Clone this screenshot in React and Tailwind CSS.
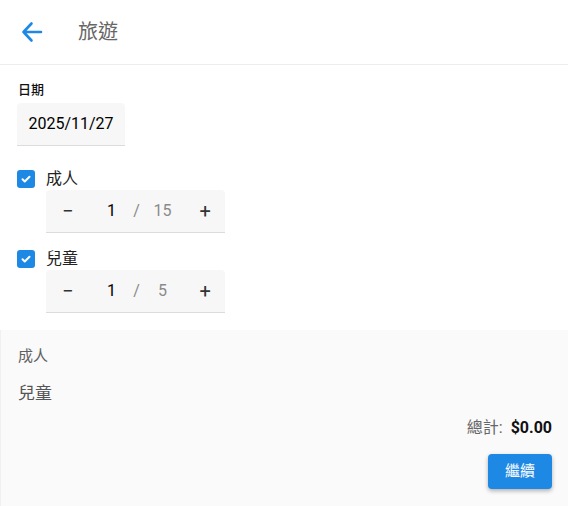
import { useState } from 'react'

const font = { fontFamily: 'Roboto, "Noto Sans CJK TC", sans-serif' }

function Stepper({ value, max }) {
  return (
    <div className="ml-[46px] mt-[1px] flex h-[43px] w-[179px] items-center rounded-t bg-[#f7f7f7] border-b border-[#dcdcdc] text-[16px]">
      <span className="w-[44px] text-center text-[20px] text-[#333]">−</span>
      <span className="w-[44px] text-center text-black">{value}</span>
      <span className="text-[#8a8a8a]">/</span>
      <span className="w-[46px] text-center text-[#8a8a8a]">{max}</span>
      <span className="w-[40px] text-center text-[20px] text-[#333]">+</span>
    </div>
  )
}

function Check({ label }) {
  return (
    <div className="flex items-center h-[20px] pl-[17px]">
      <span className="flex h-[18px] w-[18px] items-center justify-center rounded-[3px] bg-[#1e88e5]">
        <svg width="12" height="12" viewBox="0 0 24 24" fill="none" stroke="white" strokeWidth="4" strokeLinecap="round" strokeLinejoin="round">
          <path d="M5 12.5l4.5 4.5L19 7.5" />
        </svg>
      </span>
      <span className="ml-[11px] text-[16px] text-[#222]">{label}</span>
    </div>
  )
}

export default function App() {
  const [adult] = useState(1)
  const [child] = useState(1)

  return (
    <div className="w-[568px] h-[506px] bg-white overflow-hidden" style={font}>
      <div className="flex h-[65px] items-center border-b border-[#ededed]">
        <svg className="ml-[20px]" width="24" height="24" viewBox="0 0 24 24" fill="none" stroke="#1e88e5" strokeWidth="2.6" strokeLinecap="round" strokeLinejoin="round">
          <path d="M21 12H3.5M11.5 3.5L3.5 12l8 8.5" />
        </svg>
        <span className="ml-[34px] text-[20px] text-[#666]">旅遊</span>
      </div>

      <div className="pl-[18px] pt-[17px] text-[13px] font-medium text-[#111] leading-[16px]">日期</div>
      <div className="ml-[17px] mt-[5px] flex h-[43px] w-[108px] items-center justify-center rounded-t bg-[#f7f7f7] border-b border-[#dcdcdc] text-[16px] text-black">
        2025/11/27
      </div>

      <div className="mt-[23px]">
        <Check label="成人" />
        <Stepper value={adult} max={15} />
      </div>
      <div className="mt-[16px]">
        <Check label="兒童" />
        <Stepper value={child} max={5} />
      </div>

      <div className="mt-[17px] h-[176px] bg-[#fafafa] border-l border-[#f0f0f0] pl-[17px] pr-[16px] pt-[16px]">
        <div className="text-[15px] text-[#616161] leading-[20px]">成人</div>
        <div className="mt-[16px] text-[17px] text-[#555] leading-[22px]">兒童</div>
        <div className="mt-[12px] flex justify-end items-baseline text-[16px]">
          <span className="text-[#666]">總計:</span>
          <span className="ml-[8px] font-bold text-[#111]">$0.00</span>
        </div>
        <div className="mt-[14px] flex justify-end">
          <button className="h-[35px] w-[64px] rounded-[4px] bg-[#1e88e5] text-[15px] text-white shadow-[0_2px_4px_rgba(0,0,0,0.3)]">
            繼續
          </button>
        </div>
      </div>
    </div>
  )
}
